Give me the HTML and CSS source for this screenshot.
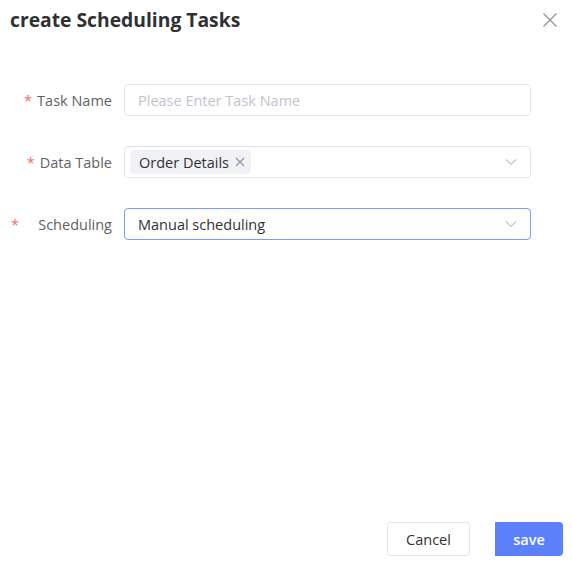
FILE: index.html
```html
<!DOCTYPE html>
<html>
<head>
<meta charset="utf-8">
<link rel="stylesheet" href="styles.css">
</head>
<body>
<div class="dialog">
  <div class="header">
    <div class="title">create Scheduling Tasks</div>
    <svg class="close" width="16" height="16" viewBox="0 0 16 16"><path d="M1.5 1.5L14.5 14.5M14.5 1.5L1.5 14.5" stroke="#909399" stroke-width="1.3" fill="none"/></svg>
  </div>
  <div class="form">
    <div class="row">
      <div class="label"><span class="req">*</span>Task Name</div>
      <div class="control"><span class="placeholder">Please Enter Task Name</span></div>
    </div>
    <div class="row">
      <div class="label"><span class="req">*</span>Data Table</div>
      <div class="control select">
        <span class="tag">Order Details<svg class="tag-x" width="10" height="10" viewBox="0 0 10 10"><path d="M1 1L9 9M9 1L1 9" stroke="#909399" stroke-width="1.1" fill="none"/></svg></span>
        <svg class="arrow" width="12" height="8" viewBox="0 0 12 8"><path d="M1 1.5L6 6.5L11 1.5" stroke="#c0c4cc" stroke-width="1.1" fill="none"/></svg>
      </div>
    </div>
    <div class="row">
      <div class="label label-wide"><span class="req">*</span><span>Scheduling</span></div>
      <div class="control select focus">
        <span class="value">Manual scheduling</span>
        <svg class="arrow" width="12" height="8" viewBox="0 0 12 8"><path d="M1 1.5L6 6.5L11 1.5" stroke="#c0c4cc" stroke-width="1.1" fill="none"/></svg>
      </div>
    </div>
  </div>
  <div class="footer">
    <button class="btn cancel">Cancel</button>
    <button class="btn save">save</button>
  </div>
</div>
</body>
</html>
```
FILE: styles.css
```css
html, body {
  margin: 0;
  padding: 0;
  background: #fff;
}
body {
  font-family: "Open Sans", "Noto Sans", sans-serif;
  color: #303133;
}
.dialog {
  width: 572px;
  height: 565px;
  display: flex;
  flex-direction: column;
  box-sizing: border-box;
}
.header {
  display: flex;
  justify-content: space-between;
  align-items: center;
  padding: 6px 14px 0 10px;
  height: 28px;
}
.title {
  font-size: 19.3px;
  font-weight: 700;
  color: #303133;
  line-height: 28px;
}
.form {
  display: flex;
  flex-direction: column;
  gap: 30px;
  margin-top: 50px;
}
.row {
  display: flex;
  align-items: center;
  height: 32px;
}
.label {
  width: 112px;
  text-align: right;
  font-size: 14.5px;
  color: #606266;
  padding-right: 12px;
  box-sizing: content-box;
}
.label-wide {
  display: flex;
  justify-content: space-between;
  padding-left: 11px;
  width: 101px;
}
.req {
  color: #f56c6c;
  margin-right: 5px;
}
.control {
  width: 407px;
  height: 32px;
  box-sizing: border-box;
  border: 1px solid #e4e7ed;
  border-radius: 4px;
  display: flex;
  align-items: center;
  padding: 0 13px;
  font-size: 14.5px;
}
.placeholder {
  color: #c0c4cc;
}
.select {
  padding-left: 5px;
}
.focus {
  border-color: #7b9cf5;
  padding-left: 13px;
}
.value {
  color: #303133;
  flex: 1;
}
.tag {
  background: #f0f2f5;
  border-radius: 4px;
  height: 24px;
  display: inline-flex;
  align-items: center;
  padding: 0 6px 0 9px;
  color: #303133;
  font-size: 14.5px;
}
.tag-x {
  margin-left: 6px;
}
.arrow {
  margin-left: auto;
}
.footer {
  margin-top: auto;
  display: flex;
  justify-content: flex-end;
  gap: 25px;
  padding: 0 9px 9px 0;
}
.btn {
  height: 34px;
  font-family: inherit;
  font-size: 14.5px;
  cursor: pointer;
}
.cancel {
  width: 83px;
  background: #fff;
  border: 1px solid #e4e7ed;
  border-radius: 3px;
  color: #303133;
}
.save {
  width: 68px;
  background: #5b80fa;
  border: none;
  border-radius: 0 4px 4px 0;
  color: #fff;
  font-weight: 600;
}
```
